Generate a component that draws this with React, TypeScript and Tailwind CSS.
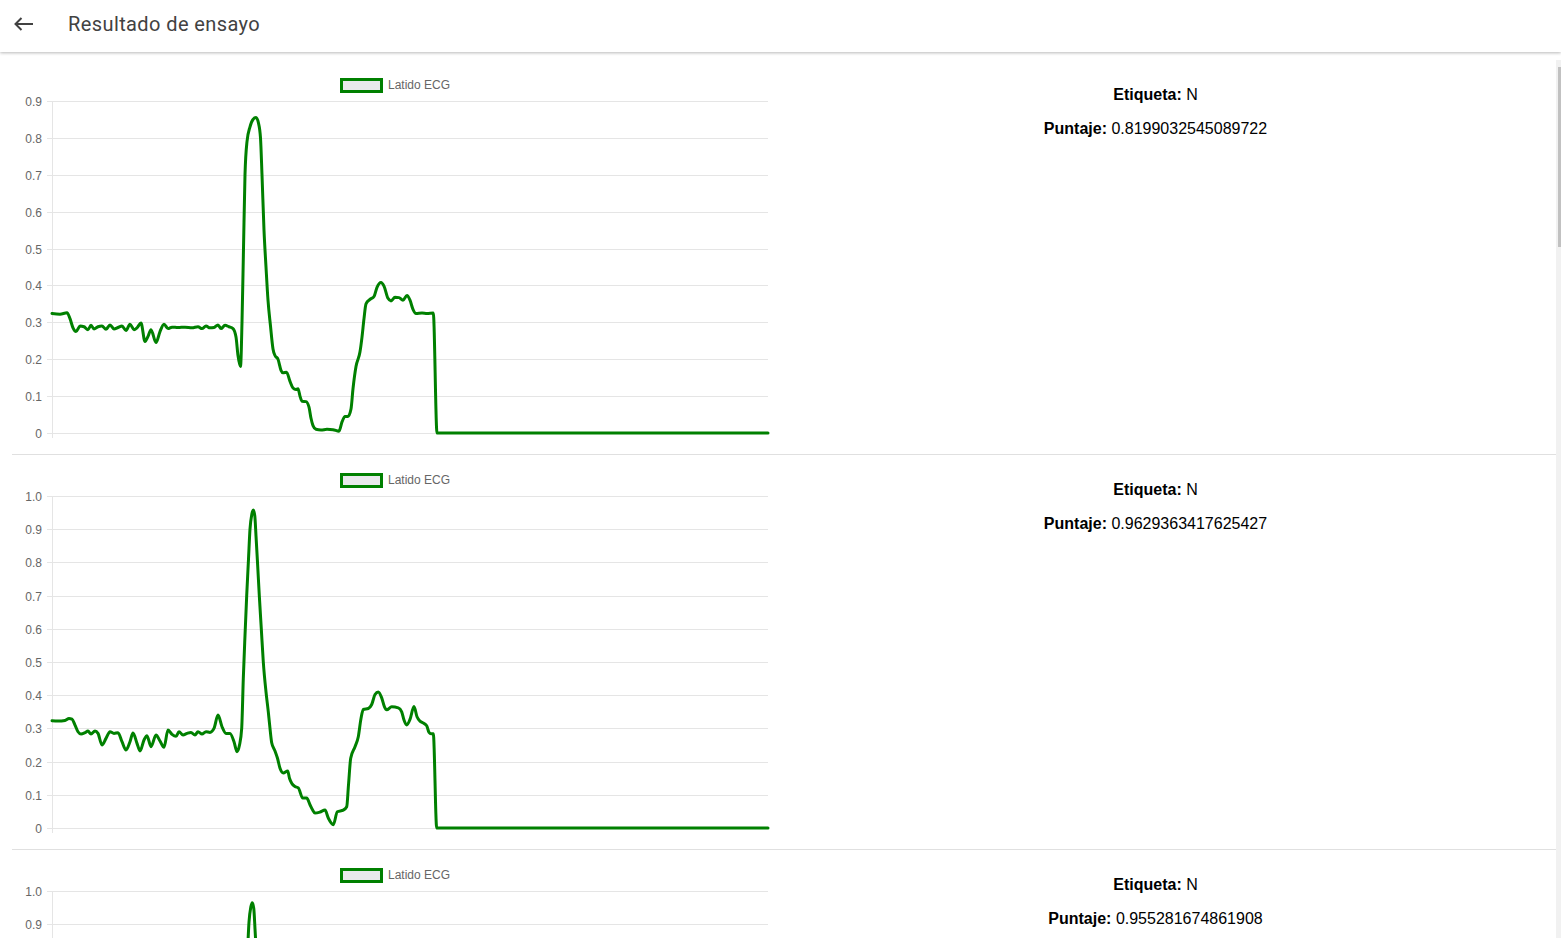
import React from "react"

type Pt = [number, number]

const GREEN = "#008000"

// Plot area inside each chart svg (svg left edge sits at page x = 12)
const SVG_W = 768
const SVG_H = 394
const PLOT_L = 40
const PLOT_R = 756
const PLOT_T = 41
const PLOT_B = 373

const BEAT_A: Pt[] = [
  [52, 0.324], [60, 0.322], [67, 0.326], [70, 0.31], [73, 0.285], [76, 0.275], [80, 0.29], [84, 0.288],
  [88, 0.28], [91, 0.292], [94, 0.282], [98, 0.288], [102, 0.29], [106, 0.281], [110, 0.293], [114, 0.282],
  [118, 0.286], [122, 0.29], [126, 0.278], [130, 0.295], [134, 0.28], [137, 0.285], [141, 0.298], [145, 0.248],
  [148, 0.262], [151, 0.28], [156, 0.245], [160, 0.275], [164, 0.295], [168, 0.283], [172, 0.287], [178, 0.286],
  [185, 0.287], [192, 0.285], [198, 0.288], [202, 0.283], [206, 0.29], [210, 0.285], [214, 0.286], [218, 0.293],
  [221, 0.283], [225, 0.292], [229, 0.288], [233, 0.283], [236, 0.26], [238, 0.21], [240.5, 0.18], [242, 0.3],
  [243.5, 0.5], [245, 0.7], [247, 0.79], [250, 0.83], [253, 0.85], [256, 0.855], [258.5, 0.84], [260.5, 0.8],
  [262, 0.7], [264, 0.55], [266, 0.45], [268, 0.36], [270.5, 0.29], [273, 0.228], [275, 0.21], [278, 0.2],
  [281, 0.17], [283, 0.163], [286.5, 0.165], [290, 0.14], [293, 0.122], [296, 0.118], [298, 0.12], [300, 0.1],
  [302, 0.086], [306, 0.085], [309, 0.07], [311, 0.04], [313, 0.02], [316, 0.01], [321, 0.008], [327, 0.01],
  [333, 0.009], [339, 0.005], [342, 0.03], [345, 0.045], [348, 0.045], [351, 0.065], [353, 0.12], [356, 0.18],
  [360, 0.22], [362, 0.26], [364, 0.31], [366, 0.35], [370, 0.362], [374, 0.37], [377, 0.395], [381, 0.408],
  [384, 0.398], [388, 0.365], [391, 0.358], [395, 0.368], [399, 0.367], [403, 0.36], [407, 0.373], [410, 0.36],
  [413, 0.335], [416, 0.324], [422, 0.325], [427, 0.324], [433.3, 0.325], [437, 0], [768, 0],
]

const BEAT_B: Pt[] = [
  [52, 0.323], [58, 0.322], [65, 0.324], [69, 0.33], [72, 0.328], [75, 0.31], [78, 0.29], [81, 0.283],
  [85, 0.287], [88, 0.292], [91, 0.283], [95, 0.292], [98, 0.285], [102, 0.25], [106, 0.27], [110, 0.29],
  [114, 0.285], [118, 0.287], [122, 0.26], [126, 0.235], [130, 0.26], [133, 0.286], [137, 0.255], [140, 0.232],
  [144, 0.265], [147, 0.278], [151, 0.245], [156, 0.28], [160, 0.262], [164, 0.243], [168, 0.295], [172, 0.282],
  [176, 0.276], [179, 0.29], [183, 0.28], [187, 0.285], [191, 0.288], [195, 0.28], [198, 0.29], [202, 0.283],
  [206, 0.29], [210, 0.288], [214, 0.3], [218, 0.34], [222, 0.305], [226, 0.285], [230, 0.285], [234, 0.26],
  [237, 0.23], [239.5, 0.25], [241.7, 0.3], [243.3, 0.45], [245, 0.58], [246.7, 0.7], [248.5, 0.81], [250, 0.9],
  [251.8, 0.945], [253.3, 0.958], [254.8, 0.94], [256, 0.88], [257.5, 0.8], [259.3, 0.7], [261.3, 0.6], [263.3, 0.5],
  [266, 0.41], [268.3, 0.35], [270, 0.3], [271.7, 0.257], [275, 0.232], [277.5, 0.21], [280, 0.18], [283.3, 0.166],
  [287.7, 0.172], [289.5, 0.15], [291.7, 0.135], [295, 0.125], [298.3, 0.121], [302.7, 0.09], [306.7, 0.09], [310, 0.07],
  [312.5, 0.055], [315, 0.045], [320, 0.048], [325, 0.054], [328.3, 0.03], [333.3, 0.01], [337.3, 0.049], [343.3, 0.054],
  [346.7, 0.064], [348.5, 0.13], [350.7, 0.21], [355, 0.245], [358.3, 0.275], [361, 0.33], [363.3, 0.357], [368.3, 0.36],
  [371.7, 0.372], [375, 0.402], [378.3, 0.41], [381.7, 0.392], [384.5, 0.365], [386.7, 0.356], [391.7, 0.365], [398.3, 0.362],
  [401.7, 0.35], [404, 0.325], [406.7, 0.31], [410, 0.327], [414, 0.366], [417, 0.335], [420, 0.322], [423.3, 0.316],
  [426.7, 0.308], [429, 0.288], [431, 0.284], [433.3, 0.284], [436.7, 0], [768, 0],
]

const BEAT_C: Pt[] = BEAT_B.map(([x, v]) => [x - 1, x > 244 && x < 262 ? v * 1.007 : v])

const RESULTS = [
  { data: BEAT_A, max: 0.9, label: "N", score: "0.8199032545089722" },
  { data: BEAT_B, max: 1.0, label: "N", score: "0.9629363417625427" },
  { data: BEAT_C, max: 1.0, label: "N", score: "0.955281674861908" },
  { data: BEAT_A, max: 0.9, label: "N", score: "0.9107745289802551" },
  { data: BEAT_B, max: 1.0, label: "N", score: "0.8876021504402161" },
  { data: BEAT_C, max: 1.0, label: "N", score: "0.9411542415618896" },
  { data: BEAT_A, max: 0.9, label: "N", score: "0.8733909130096436" },
  { data: BEAT_B, max: 1.0, label: "N", score: "0.9502894282341003" },
  { data: BEAT_C, max: 1.0, label: "N", score: "0.9268118143081665" },
  { data: BEAT_A, max: 0.9, label: "N", score: "0.8991307616233826" },
  { data: BEAT_B, max: 1.0, label: "N", score: "0.9345011711120605" },
]

// monotone-x cubic path (no overshoot on the sharp drop)
function monotonePath(pts: Pt[]) {
  const n = pts.length
  const m: number[] = new Array(n).fill(0)
  const s: number[] = []
  for (let i = 0; i < n - 1; i++) {
    const h = pts[i + 1][0] - pts[i][0]
    s.push(h ? (pts[i + 1][1] - pts[i][1]) / h : 0)
  }
  for (let i = 1; i < n - 1; i++) {
    const h0 = pts[i][0] - pts[i - 1][0]
    const h1 = pts[i + 1][0] - pts[i][0]
    const s0 = s[i - 1]
    const s1 = s[i]
    const p = (s0 * h1 + s1 * h0) / (h0 + h1)
    m[i] = (Math.sign(s0) + Math.sign(s1)) * Math.min(Math.abs(s0), Math.abs(s1), 0.5 * Math.abs(p)) || 0
  }
  m[0] = (3 * s[0] - m[1]) / 2
  m[n - 1] = (3 * s[n - 2] - m[n - 2]) / 2
  let d = `M${pts[0][0].toFixed(2)},${pts[0][1].toFixed(2)}`
  for (let i = 0; i < n - 1; i++) {
    const [x0, y0] = pts[i]
    const [x1, y1] = pts[i + 1]
    const dx = (x1 - x0) / 3
    d += `C${(x0 + dx).toFixed(2)},${(y0 + m[i] * dx).toFixed(2)} ${(x1 - dx).toFixed(2)},${(y1 - m[i + 1] * dx).toFixed(2)} ${x1.toFixed(2)},${y1.toFixed(2)}`
  }
  return d
}

function BeatChart({ data, max }: { data: Pt[]; max: number }) {
  const steps = Math.round(max * 10)
  const yOf = (v: number) => PLOT_B - (v / max) * (PLOT_B - PLOT_T)
  const pts: Pt[] = data.map(([x, v]) => [x - 12, yOf(v)])
  const ticks = Array.from({ length: steps + 1 }, (_, i) => i)

  return (
    <svg width={SVG_W} height={SVG_H} className="block shrink-0" style={{ fontFamily: "'Liberation Sans', Arial, sans-serif" }}>
      {ticks.map((i) => {
        const y = Math.round(yOf(i / 10)) + 0.5
        const label = i === 0 ? "0" : (i / 10).toFixed(1)
        return (
          <g key={i}>
            <line x1={35} x2={PLOT_R} y1={y} y2={y} stroke="#e5e5e5" strokeWidth={1} />
            <text x={30} y={y + 4} textAnchor="end" fontSize={12} fill="#666">
              {label}
            </text>
          </g>
        )
      })}
      <line x1={PLOT_L + 0.5} x2={PLOT_L + 0.5} y1={PLOT_T} y2={PLOT_B + 5} stroke="#e5e5e5" strokeWidth={1} />

      <rect x={329.5} y={19.5} width={40} height={12} fill="#e9eaec" stroke={GREEN} strokeWidth={3} />
      <text x={376} y={29} fontSize={12} fill="#666">
        Latido ECG
      </text>

      <path d={monotonePath(pts)} fill="none" stroke={GREEN} strokeWidth={3} strokeLinejoin="round" strokeLinecap="round" />
    </svg>
  )
}

export default function App() {
  return (
    <div className="flex h-screen flex-col overflow-hidden bg-white" style={{ fontFamily: "'Liberation Sans', Arial, sans-serif" }}>
      <header className="relative z-10 flex h-[52px] shrink-0 items-center bg-white pb-[4px] shadow-[0_1px_3px_rgba(0,0,0,0.28)]">
        <button type="button" className="flex h-[40px] w-[48px] items-center justify-center" aria-label="Volver">
          <svg width="20" height="14" viewBox="0 0 20 14" fill="none" stroke="#424242" strokeWidth={2}>
            <path d="M7.5 1 L1.5 7 L7.5 13" />
            <path d="M1.5 7 H19" />
          </svg>
        </button>
        <h1 className="pl-[20px] text-[20px] leading-none tracking-[0.4px] text-[#424242]" style={{ fontFamily: "Roboto, 'Liberation Sans', sans-serif" }}>
          Resultado de ensayo
        </h1>
      </header>

      <div className="flex min-h-0 flex-1">
        <main className="min-w-0 flex-1 overflow-y-auto pt-2">
          {RESULTS.map((r, i) => (
            <div key={i} className="ml-3 flex border-b border-[#e0e0e0]">
              <BeatChart data={r.data} max={r.max} />
              <div className="flex flex-1 flex-col items-center gap-4 pr-[25px] pt-[26px] text-[16px] leading-[18px] text-black">
                <p>
                  <b>Etiqueta:</b> {r.label}
                </p>
                <p>
                  <b>Puntaje:</b> {r.score}
                </p>
              </div>
            </div>
          ))}
        </main>
        {/* thin overlay-style scrollbar as in the capture */}
        <div className="mt-2 w-[5px] shrink-0 bg-[#f1f1f1]">
          <div className="ml-[2px] mt-[7px] h-[180px] w-[3px] bg-[#c1c1c1]" />
        </div>
      </div>
    </div>
  )
}
